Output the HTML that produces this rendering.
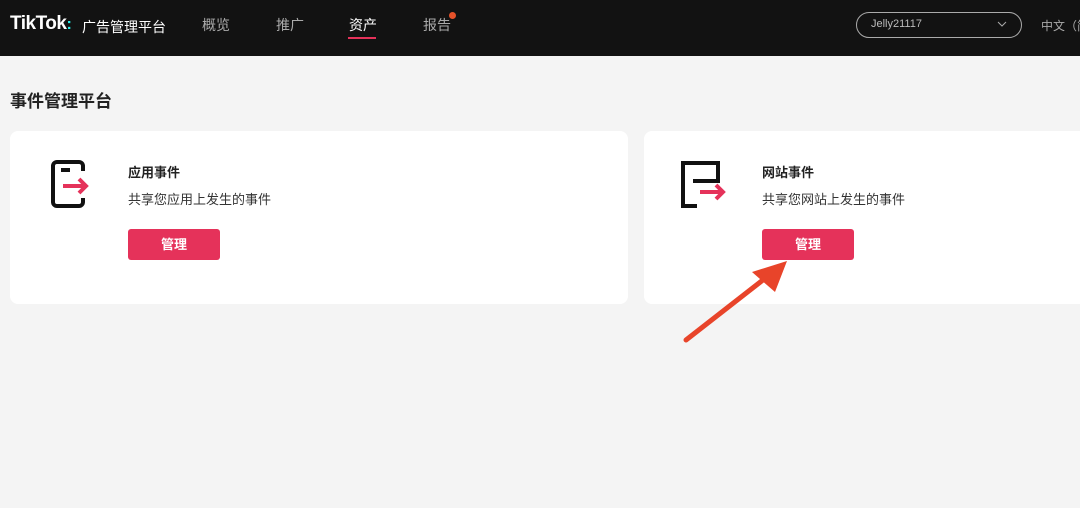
<!DOCTYPE html>
<html><head><meta charset="utf-8"><style>
*{margin:0;padding:0;box-sizing:border-box}
body{width:1080px;height:508px;overflow:hidden;background:#f4f4f4;font-family:"Liberation Sans","Noto Sans CJK SC",sans-serif;position:relative}
.hd{position:absolute;left:0;top:0;width:1080px;height:56px;background:#121212;color:#fff}
.abs{position:absolute;white-space:nowrap}
.card{position:absolute;background:#fff;border-radius:8px;top:131px;height:173px}
.btn{position:absolute;width:92px;height:31px;background:#e5325a;border-radius:3px;color:#fff;font-size:13px;font-weight:bold;text-align:center;line-height:31px}
.t{font-size:13px;font-weight:bold;color:#222}
.d{font-size:13px;color:#333}
</style></head><body>
<div class="hd">
<div class="abs" style="left:10px;top:13px;font-size:19px;font-weight:bold;letter-spacing:-0.5px">TikTok<span style="color:#25f4ee;font-size:16px">:</span></div>
<div class="abs" style="left:82px;top:17px;font-size:14px">广告管理平台</div>
<div class="abs" style="left:202px;top:15px;font-size:14px;color:#aaa">概览</div>
<div class="abs" style="left:276px;top:15px;font-size:14px;color:#aaa">推广</div>
<div class="abs" style="left:349px;top:15px;font-size:14px;color:#fff">资产</div>
<div class="abs" style="left:348px;top:37px;width:28px;height:2px;background:#e5325a"></div>
<div class="abs" style="left:423px;top:15px;font-size:14px;color:#aaa">报告</div>
<div class="abs" style="left:449px;top:12px;width:7px;height:7px;border-radius:50%;background:#e5522a"></div>
<div class="abs" style="left:856px;top:12px;width:166px;height:26px;border:1px solid #aaa;border-radius:13px"></div>
<div class="abs" style="left:871px;top:18px;font-size:11px;color:#bbb">Jelly21117</div>
<svg class="abs" style="left:997px;top:20px" width="10" height="8"><path d="M1 2l4 4 4-4" stroke="#aaa" fill="none"/></svg>
<div class="abs" style="left:1041px;top:17px;font-size:12px;color:#aaa">中文（简</div>
</div>
<div class="abs" style="left:10px;top:87px;font-size:17px;font-weight:bold;color:#222">事件管理平台</div>
<div class="card" style="left:10px;width:618px"></div>
<div class="card" style="left:644px;width:450px"></div>
<svg class="abs" style="left:0;top:0" width="1080" height="508">
<path d="M83 171V166a4 4 0 0 0-4-4H57a4 4 0 0 0-4 4v36a4 4 0 0 0 4 4h22a4 4 0 0 0 4-4v-4" stroke="#111" stroke-width="4" fill="none"/>
<path d="M61 170h9" stroke="#111" stroke-width="4"/>
<path d="M63 186h22M79 179l7 7-7 7" stroke="#e5325a" stroke-width="4" fill="none"/>
<path d="M683 208V163h35v18h-25" stroke="#111" stroke-width="4" fill="none"/>
<path d="M683 206h14" stroke="#111" stroke-width="4"/>
<path d="M700 192h22M716 185l7 7-7 7" stroke="#e5325a" stroke-width="4" fill="none"/>
<path d="M686 340L768 276" stroke="#e8442a" stroke-width="5" stroke-linecap="round"/>
<path d="M787 261L752 272L775 292Z" fill="#e8442a"/>
</svg>
<div class="abs t" style="left:128px;top:162px">应用事件</div>
<div class="abs d" style="left:128px;top:189px">共享您应用上发生的事件</div>
<div class="btn" style="left:128px;top:229px">管理</div>
<div class="abs t" style="left:762px;top:162px">网站事件</div>
<div class="abs d" style="left:762px;top:189px">共享您网站上发生的事件</div>
<div class="btn" style="left:762px;top:229px">管理</div>
</body></html>
